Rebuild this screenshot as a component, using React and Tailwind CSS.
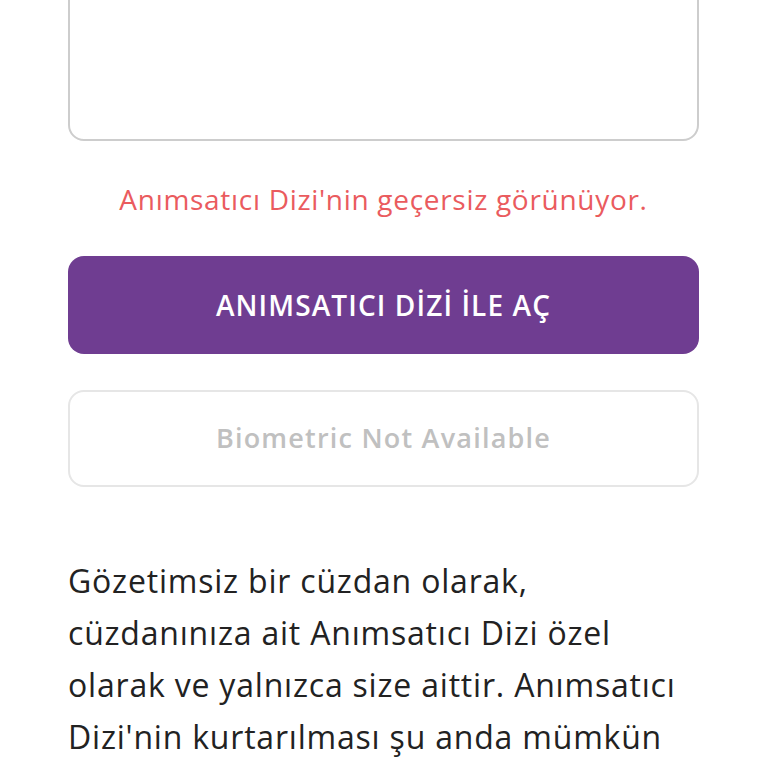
export default function App() {
  return (
    <div className="min-h-screen bg-white overflow-hidden" style={{ fontFamily: '"Open Sans", "Noto Sans", sans-serif' }}>
      <div className="px-[68px] pr-[69px]">
        {/* Mnemonic input */}
        <div className="-mt-[60px] h-[201px] rounded-[16px] border-2 border-[#cdcdcd] bg-white" />

        {/* Error */}
        <p className="mt-[40px] h-[36px] text-center text-[28px] leading-[36px] tracking-[0.025em] text-[#ea5b5e]">
          Anımsatıcı Dizi'nin geçersiz görünüyor.
        </p>

        {/* Primary action */}
        <button className="mt-[39px] flex h-[98px] w-full items-center justify-center rounded-[16px] bg-[#6f3d91] text-[28px] font-semibold tracking-[0.04em] text-white">
          ANIMSATICI DİZİ İLE AÇ
        </button>

        {/* Biometric */}
        <button className="mt-[36px] flex h-[97px] w-full items-center justify-center rounded-[16px] border-2 border-[#e6e6e6] bg-white text-[27px] font-semibold tracking-[0.045em] text-[#c0c0c0]">
          Biometric Not Available
        </button>

        {/* Info text */}
        <p className="mt-[68px] text-[32px] leading-[52px] tracking-[0.025em] text-[#222222]">
          Gözetimsiz bir cüzdan olarak, cüzdanınıza ait Anımsatıcı Dizi özel olarak ve yalnızca size aittir. Anımsatıcı Dizi'nin kurtarılması şu anda mümkün değildir.
        </p>
      </div>
    </div>
  );
}
